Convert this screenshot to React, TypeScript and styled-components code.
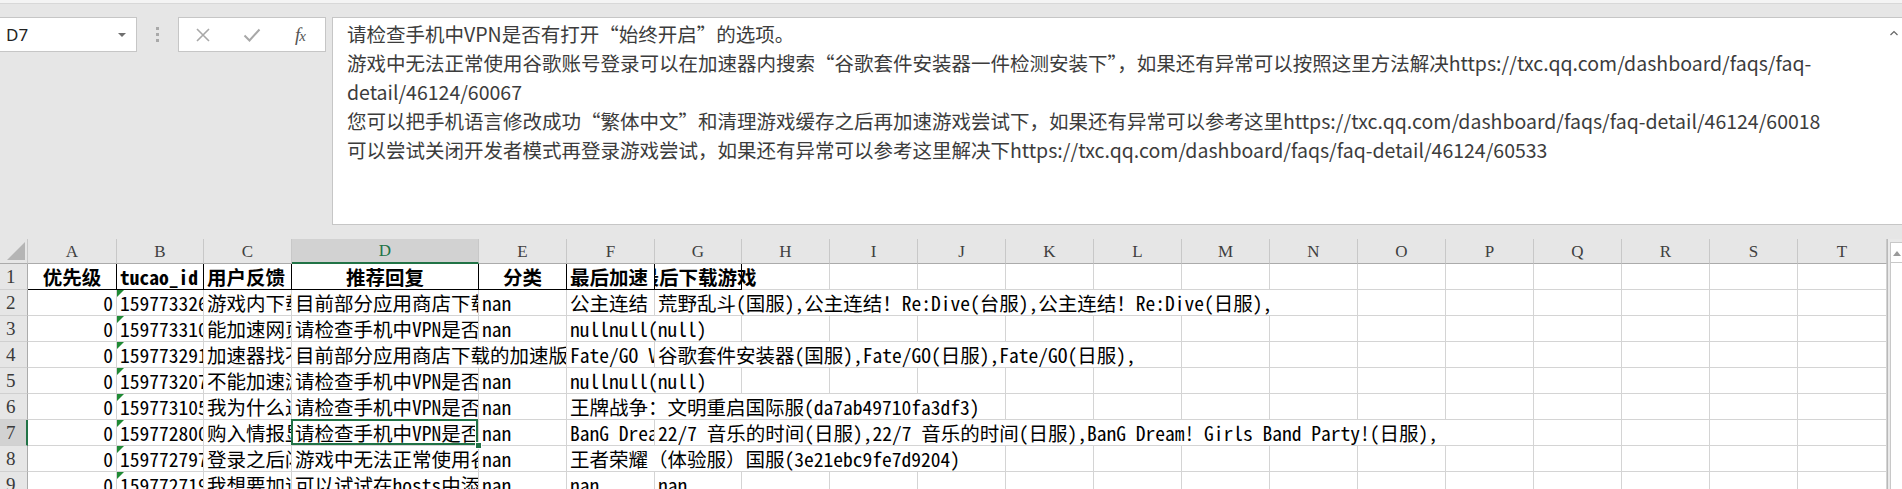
import React from "react";
import styled, { createGlobalStyle } from "styled-components";

type Align = "left" | "right" | "center";

type CellData = {
  text?: string;
  align?: Align;
  span?: number;
  spill?: boolean;
  flag?: boolean;
};

const COLS = ["A", "B", "C", "D", "E", "F", "G", "H", "I", "J", "K", "L", "M", "N", "O", "P", "Q", "R", "S", "T"];
const WIDTHS = [89, 87, 88, 187, 88, 88, 87, 88, 88, 88, 88, 88, 88, 88, 88, 88, 88, 88, 88, 89];
const HEAD_COLS = ["A", "B", "C", "D", "E", "F", "G"];

const FORMULA_LINES = [
  "请检查手机中VPN是否有打开“始终开启”的选项。",
  "游戏中无法正常使用谷歌账号登录可以在加速器内搜索“谷歌套件安装器一件检测安装下”，如果还有异常可以按照这里方法解决https://txc.qq.com/dashboard/faqs/faq-",
  "detail/46124/60067",
  "您可以把手机语言修改成功“繁体中文”和清理游戏缓存之后再加速游戏尝试下，如果还有异常可以参考这里https://txc.qq.com/dashboard/faqs/faq-detail/46124/60018",
  "可以尝试关闭开发者模式再登录游戏尝试，如果还有异常可以参考这里解决下https://txc.qq.com/dashboard/faqs/faq-detail/46124/60533",
];

const VPN_TIP = "请检查手机中VPN是否有打开“始终开启”的选项。";

const ROWS: Record<string, CellData>[] = [
  {
    A: { text: "优先级", align: "center" },
    B: { text: "tucao_id" },
    C: { text: "用户反馈" },
    D: { text: "推荐回复", align: "center" },
    E: { text: "分类", align: "center" },
    F: { text: "最后加速" },
    G: { text: "最后下载游戏", align: "center", spill: true },
  },
  {
    A: { text: "0", align: "right" },
    B: { text: "1597733264", flag: true },
    C: { text: "游戏内下载资源失败" },
    D: { text: "目前部分应用商店下载的加速版本无法使用" },
    E: { text: "nan" },
    F: { text: "公主连结" },
    G: { text: "荒野乱斗(国服),公主连结！Re:Dive(台服),公主连结！Re:Dive(日服),", span: 8 },
  },
  {
    A: { text: "0", align: "right" },
    B: { text: "1597733102", flag: true },
    C: { text: "能加速网页游戏吗" },
    D: { text: VPN_TIP },
    E: { text: "nan" },
    F: { text: "nullnull(null)", span: 2 },
  },
  {
    A: { text: "0", align: "right" },
    B: { text: "1597732917", flag: true },
    C: { text: "加速器找不到游戏" },
    D: { text: "目前部分应用商店下载的加速版本无法使用", span: 2 },
    F: { text: "Fate/GO VPN" },
    G: { text: "谷歌套件安装器(国服),Fate/GO(日服),Fate/GO(日服),", span: 6 },
  },
  {
    A: { text: "0", align: "right" },
    B: { text: "1597732071", flag: true },
    C: { text: "不能加速游戏" },
    D: { text: VPN_TIP },
    E: { text: "nan" },
    F: { text: "nullnull(null)", span: 2 },
  },
  {
    A: { text: "0", align: "right" },
    B: { text: "1597731053", flag: true },
    C: { text: "我为什么进不去" },
    D: { text: VPN_TIP },
    E: { text: "nan" },
    F: { text: "王牌战争：文明重启国际服(da7ab49710fa3df3)", span: 5 },
  },
  {
    A: { text: "0", align: "right" },
    B: { text: "1597728004", flag: true },
    C: { text: "购入情报显示" },
    D: { text: VPN_TIP },
    E: { text: "nan" },
    F: { text: "BanG Dream! Girls Band Party!(日服)" },
    G: { text: "22/7 音乐的时间(日服),22/7 音乐的时间(日服),BanG Dream! Girls Band Party!(日服),", span: 10 },
  },
  {
    A: { text: "0", align: "right" },
    B: { text: "1597727971", flag: true },
    C: { text: "登录之后闪退" },
    D: { text: "游戏中无法正常使用谷歌账号登录" },
    E: { text: "nan" },
    F: { text: "王者荣耀（体验服）国服(3e21ebc9fe7d9204)", span: 5 },
  },
  {
    A: { text: "0", align: "right" },
    B: { text: "1597727193", flag: true },
    C: { text: "我想要加速" },
    D: { text: "可以试试在hosts中添加" },
    E: { text: "nan" },
    F: { text: "nan" },
    G: { text: "nan" },
  },
];

const GlobalStyle = createGlobalStyle`
  * { box-sizing: border-box; }
  html, body {
    margin: 0;
    padding: 0;
    background: #e6e6e6;
    overflow: hidden;
  }
  body {
    width: 1902px;
    height: 489px;
  }
`;

const Page = styled.div`
  width: 1902px;
  height: 489px;
  display: flex;
  flex-direction: column;
  overflow: hidden;
`;

const TopStrip = styled.div`
  height: 4px;
  flex: none;
  background: #f4f4f4;
  border-bottom: 1px solid #d8d8d8;
`;

const FormulaRow = styled.div`
  flex: none;
  display: flex;
  align-items: flex-start;
  padding-top: 13px;
  height: 235px;
`;

const NameBox = styled.div`
  width: 138px;
  height: 35px;
  margin-left: -1px;
  display: flex;
  align-items: center;
  padding: 0 10px 0 6px;
  background: #fff;
  border: 1px solid #c6c6c6;
  font: 17px "Noto Sans", "Liberation Sans", sans-serif;
  color: #222;
`;

const Caret = styled.span`
  margin-left: auto;
  width: 0;
  height: 0;
  border-left: 4px solid transparent;
  border-right: 4px solid transparent;
  border-top: 4px solid #6f6f6f;
`;

const Grip = styled.div`
  width: 41px;
  height: 35px;
  display: flex;
  flex-direction: column;
  align-items: center;
  justify-content: center;
  gap: 3px;
`;

const GripDot = styled.span`
  width: 3px;
  height: 3px;
  background: #a9a9a9;
`;

const FxBox = styled.div`
  width: 148px;
  height: 35px;
  display: grid;
  grid-template-columns: 48px 50px 1fr;
  align-items: center;
  justify-items: center;
  background: #fff;
  border: 1px solid #c6c6c6;
`;

const FxLabel = styled.span`
  font: italic 19px "Liberation Serif", serif;
  color: #555;
  letter-spacing: -1px;
  margin-right: 2px;

  small {
    font-size: 15px;
  }
`;

const FormulaBox = styled.div`
  flex: 1;
  height: 208px;
  margin-left: 6px;
  margin-right: -1px;
  display: flex;
  background: #fff;
  border: 1px solid #c6c6c6;
`;

const FormulaText = styled.div`
  flex: 1;
  padding: 1px 0 0 14px;
  font: 19.5px/29px "Noto Sans CJK SC", "Noto Sans", sans-serif;
  color: #3c3c3c;
`;

const FormulaLine = styled.div`
  white-space: nowrap;
`;

const FormulaScroll = styled.div`
  width: 16px;
  padding-top: 12px;
  display: flex;
  justify-content: center;
`;

const GridArea = styled.div`
  flex: none;
  display: flex;
`;

const Sheet = styled.div`
  display: grid;
  grid-template-columns: 28px ${WIDTHS.map((w) => `${w}px`).join(" ")};
  grid-template-rows: 25px repeat(9, 26px);
  border-right: 1px solid #b9b9b9;
  background: #fff;
`;

const Corner = styled.div`
  background: #e6e6e6;
  border-right: 1px solid #c8c8c8;
  border-bottom: 1px solid #ababab;
  display: flex;
  align-items: flex-end;
  justify-content: flex-end;
  padding: 0 2px 3px 0;
`;

const ColHead = styled.div<{ $active?: boolean }>`
  display: flex;
  align-items: center;
  justify-content: center;
  background: ${(p) => (p.$active ? "#d2d2d2" : "#e6e6e6")};
  color: ${(p) => (p.$active ? "#217346" : "#3f3f3f")};
  border-right: 1px solid #c8c8c8;
  border-bottom: ${(p) => (p.$active ? "2px solid #217346" : "1px solid #ababab")};
  font: 17px "Liberation Serif", serif;
  padding-top: 1px;
`;

const RowHead = styled.div<{ $active?: boolean }>`
  background: ${(p) => (p.$active ? "#d2d2d2" : "#e6e6e6")};
  border-right: ${(p) => (p.$active ? "2px solid #217346" : "1px solid #ababab")};
  border-bottom: 1px solid #d0d0d0;
  padding-left: 6px;
  font: 19px/25px "Liberation Serif", serif;
  color: #3a3a3a;
`;

const Cell = styled.div<{
  $span: number;
  $align: Align;
  $bold?: boolean;
  $head?: boolean;
  $spill?: boolean;
  $flag?: boolean;
  $selected?: boolean;
}>`
  position: relative;
  grid-column: span ${(p) => p.$span};
  padding: 0 3px;
  border-right: 1px solid ${(p) => (p.$head ? "#000" : "#d4d4d4")};
  border-bottom: 1px solid ${(p) => (p.$head ? "#000" : "#d4d4d4")};
  background: #fff;
  font: ${(p) => (p.$bold ? 700 : 400)} 19.5px/25px "Noto Sans Mono CJK SC", "Noto Sans CJK SC", monospace;
  color: #000;
  text-align: ${(p) => p.$align};
  white-space: nowrap;
  overflow: ${(p) => (p.$spill || p.$selected ? "visible" : "hidden")};
  z-index: ${(p) => (p.$selected ? 3 : p.$spill ? 1 : "auto")};

  ${(p) =>
    p.$spill &&
    p.$align === "center" &&
    `
    display: flex;
    justify-content: center;
    clip-path: inset(-2px -300px -2px 0);
  `}

  ${(p) =>
    p.$flag &&
    `
    &::before {
      content: "";
      position: absolute;
      top: 0;
      left: 0;
      border-top: 7px solid #1f8a34;
      border-right: 7px solid transparent;
    }
  `}

  ${(p) =>
    p.$selected &&
    `
    &::after {
      content: "";
      position: absolute;
      inset: -1px 0 0 -1px;
      border: 2px solid #217346;
      pointer-events: none;
    }
  `}
`;

const Clip = styled.span`
  display: block;
  overflow: hidden;
`;

const FillHandle = styled.span`
  position: absolute;
  right: -4px;
  bottom: -4px;
  width: 7px;
  height: 7px;
  background: #217346;
  border: 1px solid #fff;
  z-index: 4;
`;

const SideBar = styled.div`
  width: 14px;
  padding: 3px 0 0 2px;
  background: #e9e9e9;
`;

const ScrollTrack = styled.div`
  height: 260px;
  background: #fff;
  border-left: 1px solid #c8c8c8;
  border-top: 1px solid #c8c8c8;
`;

const ScrollButton = styled.div`
  height: 20px;
  border-bottom: 1px solid #c8c8c8;
  display: flex;
  align-items: center;
  padding-left: 2px;
`;

const CloseIcon = () => (
  <svg width="16" height="16" viewBox="0 0 16 16">
    <path d="M2 2 L14 14 M14 2 L2 14" stroke="#a8a8a8" strokeWidth="1.6" fill="none" />
  </svg>
);

const CheckIcon = () => (
  <svg width="18" height="16" viewBox="0 0 18 16">
    <path d="M1.5 8.5 L6.5 13.5 L16.5 2.5" stroke="#a8a8a8" strokeWidth="2" fill="none" />
  </svg>
);

const SelectAllMark = () => (
  <svg width="18" height="18" viewBox="0 0 18 18">
    <path d="M18 0 L18 18 L0 18 Z" fill="#b5b5b5" />
  </svg>
);

const UpChevron = () => (
  <svg width="8" height="6" viewBox="0 0 8 6">
    <path d="M0.5 5 L4 1.5 L7.5 5" stroke="#666" strokeWidth="1.2" fill="none" />
  </svg>
);

const UpTriangle = () => (
  <svg width="8" height="6" viewBox="0 0 8 6">
    <path d="M0 6 L4 1 L8 6 Z" fill="#9a9a9a" />
  </svg>
);

const renderRow = (cells: Record<string, CellData>, index: number) => {
  const rowNo = index + 1;
  const out: React.ReactNode[] = [
    <RowHead key={`h${rowNo}`} $active={rowNo === 7}>
      {rowNo}
    </RowHead>,
  ];
  let skip = 0;
  COLS.forEach((col) => {
    if (skip > 0) {
      skip--;
      return;
    }
    const data = cells[col] ?? {};
    const span = data.span ?? 1;
    skip = span - 1;
    const selected = rowNo === 7 && col === "D";
    out.push(
      <Cell
        key={`${col}${rowNo}`}
        $span={span}
        $align={data.align ?? "left"}
        $bold={rowNo === 1}
        $head={rowNo === 1 && HEAD_COLS.includes(col)}
        $spill={data.spill}
        $flag={data.flag}
        $selected={selected}
      >
        {selected ? <Clip>{data.text}</Clip> : data.spill ? <span>{data.text}</span> : data.text}
        {selected && <FillHandle />}
      </Cell>
    );
  });
  return out;
};

const App = () => {
  return (
    <>
      <GlobalStyle />
      <Page>
        <TopStrip />
        <FormulaRow>
          <NameBox>
            D7
            <Caret />
          </NameBox>
          <Grip>
            <GripDot />
            <GripDot />
            <GripDot />
          </Grip>
          <FxBox>
            <CloseIcon />
            <CheckIcon />
            <FxLabel>
              f<small>x</small>
            </FxLabel>
          </FxBox>
          <FormulaBox>
            <FormulaText>
              {FORMULA_LINES.map((line, i) => (
                <FormulaLine key={i}>{line}</FormulaLine>
              ))}
            </FormulaText>
            <FormulaScroll>
              <UpChevron />
            </FormulaScroll>
          </FormulaBox>
        </FormulaRow>
        <GridArea>
          <Sheet>
            <Corner>
              <SelectAllMark />
            </Corner>
            {COLS.map((col) => (
              <ColHead key={col} $active={col === "D"}>
                {col}
              </ColHead>
            ))}
            {ROWS.map(renderRow)}
          </Sheet>
          <SideBar>
            <ScrollTrack>
              <ScrollButton>
                <UpTriangle />
              </ScrollButton>
            </ScrollTrack>
          </SideBar>
        </GridArea>
      </Page>
    </>
  );
};

export default App;
